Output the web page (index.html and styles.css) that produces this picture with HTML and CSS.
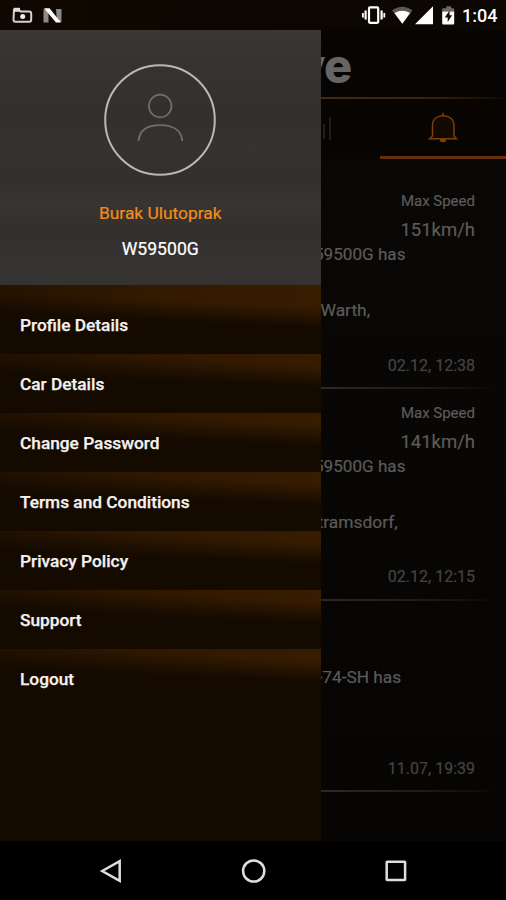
FILE: index.html
```html
<!DOCTYPE html>
<html lang="en">
<head>
<meta charset="utf-8">
<title>Drive</title>
<link rel="stylesheet" href="styles.css">
</head>
<body>
<div class="phone">
  <header class="status">
    <svg class="status-left" width="60" height="30" viewBox="0 0 60 30">
      <path d="M14 9.500h5l1.400 2h8.800q2 0 2 2v6.300q0 2-2 2H15.500q-2 0-2-2z" fill="none" stroke="#d5d2ce" stroke-width="2"/>
      <path d="M14 7.800h6v4h-6z" fill="#ddd"/><circle cx="22.700" cy="16.400" r="2.500" fill="#eee"/>
      <path d="M43.500 9l5 2v11.500h-5z" fill="#8d8986"/>
      <path d="M56 9h5.500v13H57z" fill="#8d8986"/><path d="M44 8.200h5.500L61 22.400h-5z" fill="#fff"/>
    </svg>
    <svg class="status-right" width="100" height="30" viewBox="0 0 100 30">
      <g fill="none" stroke="#fff" stroke-width="2.200"><rect x="9" y="7.400" width="9.200" height="15.400" rx="1"/><path d="M5.600 10.500v9M21.600 10.500v9"/><path d="M2.900 13v4.500M24.300 13v4.500" stroke-width="1.800"/></g>
      <path d="M32 10.500Q42.200 3 52.500 10.500L42.300 23.800z" fill="#5c5751"/><path d="M34.500 13Q42.300 8.500 50 13L42.300 23.800z" fill="#fff"/>
      <path d="M73 6.200v18H55z" fill="#fff"/>
      <path d="M82.200 11.500h12V9.200q0-1-1-1h-2V6.300h-5v1.900h-3q-1 0-1 1z" fill="#6c6863"/><path d="M82.200 11.500h12v12q0 1-1 1h-10q-1 0-1-1z" fill="#fff"/><path d="M89.500 10.500l-4.700 7h2.900v4.500l4.400-6.800h-2.600z" fill="#120b04"/>
    </svg>
    <span class="clock">1:04</span>
  </header>

  <main class="main">
    <aside class="drawer">
      <section class="profile">
        <svg class="avatar" width="112" height="112" viewBox="0 0 112 112" fill="none">
          <circle cx="56" cy="56" r="54.800" stroke="#b9b8b7" stroke-width="2"/>
          <circle cx="56.200" cy="42" r="11.300" stroke="#706f6d" stroke-width="1.700"/>
          <path d="M34.500 77C35.500 66 44 61.200 56.200 61.200S77.500 66 78.300 77" stroke="#706f6d" stroke-width="1.800"/>
        </svg>
        <div class="name"><span>Burak Ulutoprak</span></div>
        <div class="plate"><span>W59500G</span></div>
      </section>
      <nav class="menu">
        <a class="item first"><span>Profile Details</span></a>
        <a class="item"><span>Car Details</span></a>
        <a class="item"><span>Change Password</span></a>
        <a class="item"><span>Terms and Conditions</span></a>
        <a class="item"><span>Privacy Policy</span></a>
        <a class="item"><span>Support</span></a>
        <a class="item"><span>Logout</span></a>
      </nav>
    </aside>

    <section class="content">
      <div class="brand"><span>ve</span></div>
      <div class="tabs">
        <div class="tab stats"><svg width="12" height="30" viewBox="0 0 12 30"><path d="M3 10v15M9 3v23" stroke="#292724" stroke-width="1.500"/></svg></div>
        <div class="tab active">
          <svg width="30" height="34" viewBox="0 0 30 34" fill="#120900" stroke="#7a4208" stroke-width="1.500"><path d="M1.500 27.800L4.500 25V14.500C4.500 8 9 4.800 15 4.800S26 8 26 14.500V25L28.500 27.800z"/><path d="M15 4.800V1.800"/><path d="M12 28v1.500q0 1.800 3 1.800t3-1.800V28z" fill="#7a4208" stroke="none"/></svg>
        </div>
      </div>
      <div class="feed">
        <article class="card">
          <div class="label">Max Speed</div><div class="speed">151km/h</div>
          <div class="msg plate-msg">59500G has</div><div class="msg place warth">Warth,</div>
          <div class="time">02.12, 12:38</div><div class="rule"></div>
        </article>
        <article class="card">
          <div class="label">Max Speed</div><div class="speed">141km/h</div>
          <div class="msg plate-msg">59500G has</div><div class="msg place dorf">tramsdorf,</div>
          <div class="time">02.12, 12:15</div><div class="rule"></div>
        </article>
        <article class="card short">
          <div class="msg sh">-74-SH has</div>
          <div class="time">11.07, 19:39</div><div class="rule"></div>
        </article>
      </div>
    </section>
  </main>

  <footer class="navbar">
    <svg width="26" height="26" viewBox="0 0 26 26"><path d="M4.200 13L21.700 3.200v19.600z"/></svg>
    <svg width="26" height="26" viewBox="0 0 26 26"><circle cx="12.700" cy="13" r="10.600"/></svg>
    <svg width="26" height="26" viewBox="0 0 26 26"><rect x="3.700" y="3.700" width="18.400" height="18.400" rx=".5"/></svg>
  </footer>
</div>
</body>
</html>
```
FILE: styles.css
```css
* { box-sizing: border-box; }
body { margin: 0; background: #000; font-family: Roboto, "Liberation Sans", sans-serif; }
.phone { width: 506px; height: 900px; display: flex; flex-direction: column; overflow: hidden; }
.status { height: 30px; display: flex; background: linear-gradient(90deg, #100800, #0b0600 60%, #0c0700); color: #fff; flex: none; }
.status-left { width: 60px; margin-right: 2px; overflow: visible; }
.status-right { margin-left: 298px; }
.clock { margin-left: 2px; font-size: 18px; line-height: 32px; font-weight: 500; white-space: nowrap; }
.main { height: 811px; flex: none; display: grid; grid-template-columns: 320.500px 185.500px; }
.drawer { background: #140a00; display: flex; flex-direction: column; }
.profile {
  height: 255px; flex: none; display: flex; flex-direction: column; align-items: center; padding-top: 34px;
  background: linear-gradient(180deg, #393836 0, #353432 10%, #343331 20%, #31302f 34%, #343331 46%, #31302f 60%, #363532 68%, #31302f 80%, #353432 91%, #343331 100%);
}
.avatar { display: block; flex: none; }
.name, .plate { font-size: 17.600px; line-height: 36px; white-space: nowrap; }
.name { margin-top: 19px; color: #f28c1a; font-size: 17.400px; -webkit-text-stroke: .2px #f28c1a; }
.plate { color: #fff; -webkit-text-stroke: .2px #fff; }
.menu { display: flex; flex-direction: column; }
.item {
  height: 59px; padding-left: 20px; line-height: 61px; font-size: 17.300px; font-weight: 500; color: #f4f2f0; white-space: nowrap;
  -webkit-text-stroke: .25px #f4f2f0;
  background: linear-gradient(90deg, rgba(20,10,0,.6), rgba(20,10,0,.2) 50%, rgba(20,10,0,0)), linear-gradient(182.500deg, #371c00 16%, #140a00 46%);
}
.first {
  height: 69px; padding-top: 10px; line-height: 60px;
  background: linear-gradient(90deg, rgba(20,10,0,.5), rgba(20,10,0,.1) 50%, rgba(20,10,0,0)), linear-gradient(182.500deg, #371c00 26%, #140a00 52%);
}
.content { background: #060503; overflow: hidden; min-width: 0; color: #5c5b59; display: flex; flex-direction: column; }
.brand {
  height: 69px; flex: none; padding-top: 11px; color: #666564; font: 800 47px/50px Inter, sans-serif;
  border-bottom: 2px solid; border-image: linear-gradient(90deg, #4b2a07, #3a2106 60%, #100900) 1; white-space: nowrap;
}
.brand span { display: block; margin-left: -24px; letter-spacing: -.5px; }
.tabs { height: 60px; flex: none; display: flex; background: #080402; }
.stats { width: 59.500px; padding-top: 15px; }
.stats svg { display: block; }
.active { flex: 1; display: flex; justify-content: center; padding-top: 13px; border-bottom: 3px solid #632f0c; margin-top: -1px; }
.feed {
  flex: 1; padding-top: 31px;
  background: radial-gradient(circle, #040302 0 1px, transparent 1.500px) 0 0 / 8px 8px, linear-gradient(#090806, #060503);
}
.card { height: 211.500px; display: flex; flex-direction: column; -webkit-text-stroke: .2px; }
.label, .speed, .time { padding-right: 31px; text-align: right; flex: none; white-space: nowrap; }
.label { font-size: 15px; line-height: 22px; }
.speed { font-size: 18.500px; line-height: 24px; margin-top: 6px; }
.msg { font-size: 17.100px; line-height: 24px; white-space: nowrap; }
.plate-msg { margin-left: -6.500px; }
.place { margin-top: 32px; }
.warth { margin-left: 0; font-size: 17.400px; }
.dorf { margin-left: -3px; font-size: 17.400px; }
.time { font-size: 16px; line-height: 22px; margin-top: 32.500px; color: #454442; }
.rule { height: 2px; flex: none; margin-top: 10.500px; margin-right: 16px; background: linear-gradient(90deg, #2b2a29, #1b1a19 65%, #0b0a09); }
.short { padding-top: 52px; height: auto; }
.sh { margin-left: -3px; font-size: 17.300px; }
.short .time { margin-top: 68.500px; }
.navbar { flex: 1; display: flex; justify-content: center; gap: 116.500px; padding: 17px 0 0 1px; background: #000; }
.navbar svg { flex: none; fill: none; stroke: #dededc; stroke-width: 2.500; }
```
